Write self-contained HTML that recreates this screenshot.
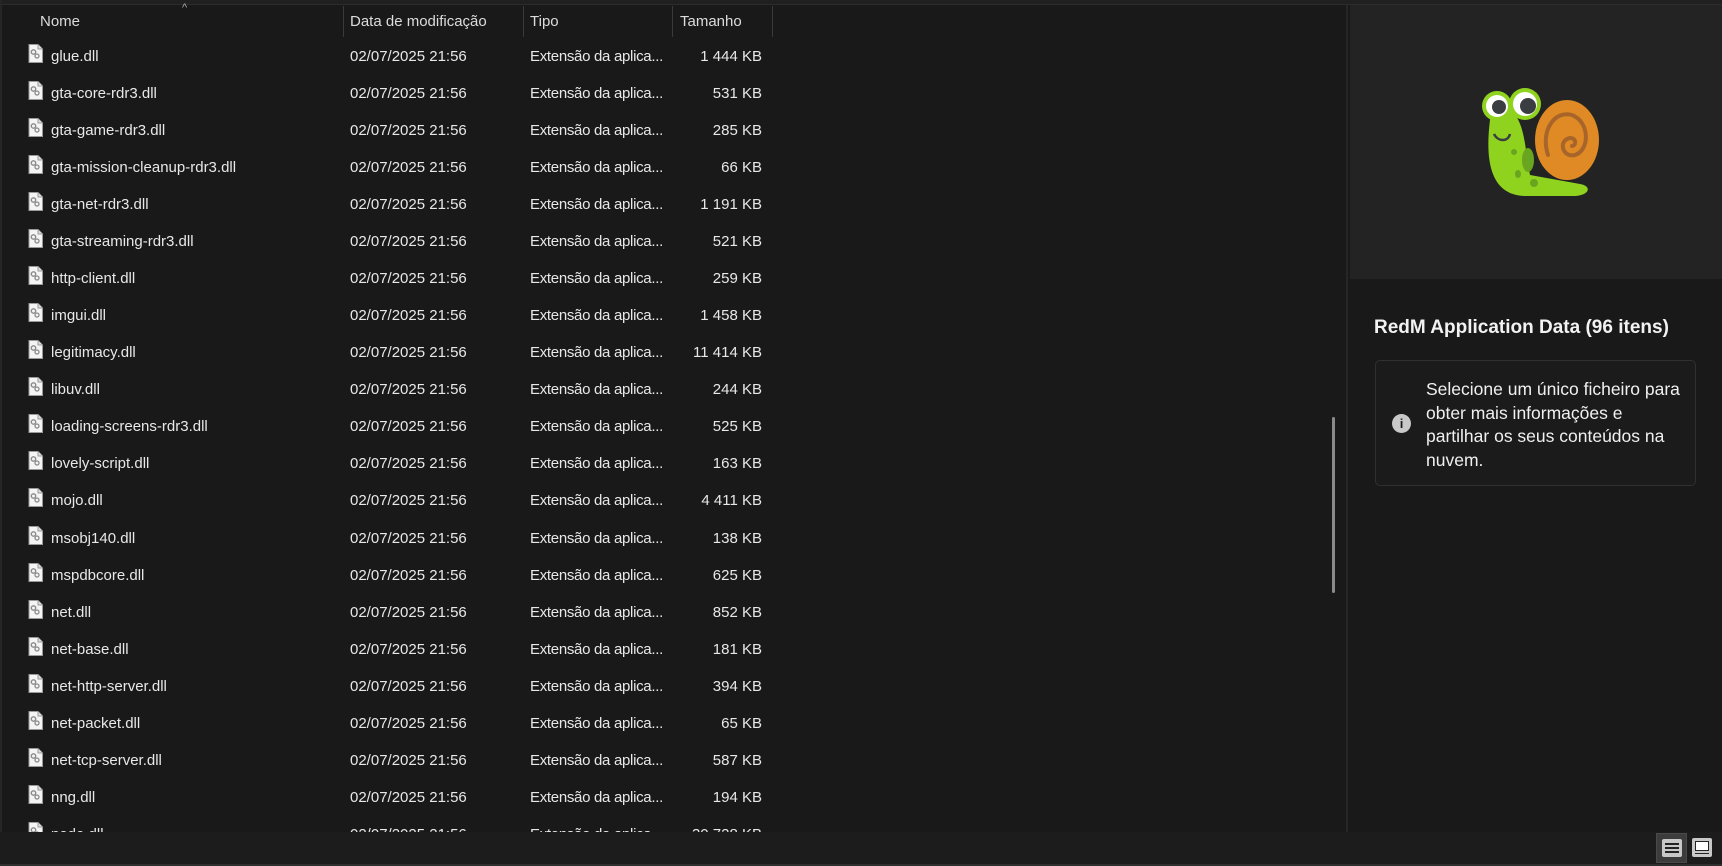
<!DOCTYPE html>
<html><head><meta charset="utf-8">
<style>
*{margin:0;padding:0;box-sizing:border-box}
body{width:1722px;height:866px;background:#191919;font-family:"Liberation Sans",sans-serif;color:#e8e8e8;position:relative;overflow:hidden}
.topline{position:absolute;left:0;top:0;width:1722px;height:5px;background:#202020;border-bottom:1px solid #2c2c2c}
.leftline{position:absolute;left:0;top:0;width:2px;height:866px;background:#262626}
.hdr{position:absolute;top:13px;font-size:15px;color:#dcdcdc}
.div{position:absolute;top:6px;height:31px;width:1px;background:#3a3a3a}
.list{position:absolute;left:0;top:37px;width:1346px;height:795px;overflow:hidden}
.row{position:absolute;left:0;height:37px;width:780px;font-size:15px}
.row span{position:absolute;top:11px;white-space:nowrap}
.n{left:51px}.d{left:350px}.t{left:530px;letter-spacing:-0.3px}.s{right:18px;text-align:right}
.ic{position:absolute;left:28px;top:7px}
.sb{position:absolute;left:1332px;top:417px;width:3px;height:176px;background:#8a8a8a;border-radius:2px}
.vdiv{position:absolute;left:1346px;top:5px;width:2px;height:827px;background:#262626}
.prev{position:absolute;left:1350px;top:5px;width:372px;height:274px;background:#232323}
.title{position:absolute;left:1374px;top:317px;font-size:19px;font-weight:bold;color:#f2f2f2}
.box{position:absolute;left:1375px;top:360px;width:321px;height:126px;border:1px solid #303030;border-radius:5px;background:#1b1b1b}
.box p{position:absolute;left:50px;top:17px;width:270px;font-size:17.5px;line-height:23.5px;color:#f0f0f0;white-space:nowrap}
.info{position:absolute;left:16px;top:53px;width:19px;height:19px;border-radius:50%;background:#c8c8c8;color:#1b1b1b;font-size:13px;text-align:center;line-height:19px;font-weight:bold}
.bot{position:absolute;left:0;top:832px;width:1722px;height:32px;background:#1c1c1c}
.botline{position:absolute;left:0;top:864px;width:1722px;height:2px;background:#2e2e2e}
</style></head><body>
<div class="topline"></div>
<div class="hdr" style="left:40px">Nome</div>
<div style="position:absolute;left:182px;top:2px;font-size:11px;color:#aaa">^</div>
<div class="div" style="left:343px"></div>
<div class="hdr" style="left:350px">Data de modificação</div>
<div class="div" style="left:523px"></div>
<div class="hdr" style="left:530px">Tipo</div>
<div class="div" style="left:672px"></div>
<div class="hdr" style="left:680px">Tamanho</div>
<div class="div" style="left:772px"></div>
<div class="list" id="list"></div>
<div class="leftline"></div>
<div class="sb"></div>
<div class="vdiv"></div>
<div class="prev">
<svg width="372" height="274" viewBox="1350 5 372 274">
 <path d="M1490 120 C1485 160 1490 195 1525 196 L1575 196 C1590 195 1592 186 1580 184 L1530 175 C1525 150 1525 120 1510 110 C1500 105 1492 110 1490 120Z" fill="#8fd31f"/>
 <ellipse cx="1567" cy="140" rx="32" ry="40" fill="#e08a25"/>
 <path d="M1548 155 C1540 130 1555 110 1572 115 C1590 122 1590 150 1575 155 C1562 158 1558 140 1570 138 C1577 138 1576 146 1572 146" fill="none" stroke="#a7652a" stroke-width="4" stroke-linecap="round"/>
 <circle cx="1497" cy="106" r="15" fill="#8fd31f"/><circle cx="1525" cy="104" r="16" fill="#8fd31f"/>
 <circle cx="1497" cy="106" r="11" fill="#fff"/><circle cx="1525" cy="104" r="12" fill="#fff"/>
 <circle cx="1499" cy="107" r="7" fill="#3a3d42"/><circle cx="1528" cy="106" r="8" fill="#3a3d42"/>
 <path d="M1494 134 C1498 142 1508 142 1510 134" fill="none" stroke="#3a3d42" stroke-width="2.5"/>
 <ellipse cx="1528" cy="160" rx="6" ry="12" fill="#6aa520"/>
 <circle cx="1514" cy="152" r="3" fill="#6aa520"/><ellipse cx="1518" cy="174" rx="3" ry="4" fill="#6aa520"/><circle cx="1534" cy="183" r="4" fill="#6aa520"/>
</svg>
</div>
<div class="title">RedM Application Data (96 itens)</div>
<div class="box"><div class="info">i</div><p>Selecione um único ficheiro para<br>obter mais informações e<br>partilhar os seus conteúdos na<br>nuvem.</p></div>
<div class="bot">
 <div style="position:absolute;left:1656px;top:1px;width:31px;height:30px;background:#3c3c3c;border:1px solid #4a4a4a"></div>
 <div style="position:absolute;left:1662px;top:7px;width:20px;height:18px;background:#c8c8c8;border-radius:2px"></div>
 <div style="position:absolute;left:1665px;top:11px;width:14px;height:2px;background:#222"></div>
 <div style="position:absolute;left:1665px;top:15px;width:14px;height:2px;background:#222"></div>
 <div style="position:absolute;left:1665px;top:19px;width:14px;height:2px;background:#222"></div>
 <div style="position:absolute;left:1692px;top:6px;width:20px;height:19px;background:#c8c8c8;border-radius:2px"></div>
 <div style="position:absolute;left:1695px;top:9px;width:14px;height:10px;background:#fff;border:1px solid #222"></div>
 <div style="position:absolute;left:1695px;top:21px;width:14px;height:1px;background:#222"></div>
</div>
<div class="botline"></div>
<script>
var f=[["glue.dll","1 444 KB"],["gta-core-rdr3.dll","531 KB"],["gta-game-rdr3.dll","285 KB"],["gta-mission-cleanup-rdr3.dll","66 KB"],["gta-net-rdr3.dll","1 191 KB"],["gta-streaming-rdr3.dll","521 KB"],["http-client.dll","259 KB"],["imgui.dll","1 458 KB"],["legitimacy.dll","11 414 KB"],["libuv.dll","244 KB"],["loading-screens-rdr3.dll","525 KB"],["lovely-script.dll","163 KB"],["mojo.dll","4 411 KB"],["msobj140.dll","138 KB"],["mspdbcore.dll","625 KB"],["net.dll","852 KB"],["net-base.dll","181 KB"],["net-http-server.dll","394 KB"],["net-packet.dll","65 KB"],["net-tcp-server.dll","587 KB"],["nng.dll","194 KB"],["node.dll","30 728 KB"]];
var ic='<svg class="ic" width="15" height="19" viewBox="0 0 15 19"><path d="M1 0.5H10L14.5 5V18.5H1Z" fill="#f4f4f4" stroke="#9a9a9a"/><path d="M10 0.5V5H14.5" fill="#ddd" stroke="#9a9a9a"/><circle cx="5.5" cy="8" r="2.2" fill="none" stroke="#8a8a8a" stroke-width="1.4"/><circle cx="9" cy="12" r="2" fill="none" stroke="#8a8a8a" stroke-width="1.3"/></svg>';
var h='';for(var i=0;i<f.length;i++){h+='<div class="row" style="top:'+(i*37.04)+'px">'+ic+'<span class="n">'+f[i][0]+'</span><span class="d">02/07/2025 21:56</span><span class="t">Extensão da aplica...</span><span class="s">'+f[i][1]+'</span></div>';}
document.getElementById('list').innerHTML=h;
</script>
</body></html>
